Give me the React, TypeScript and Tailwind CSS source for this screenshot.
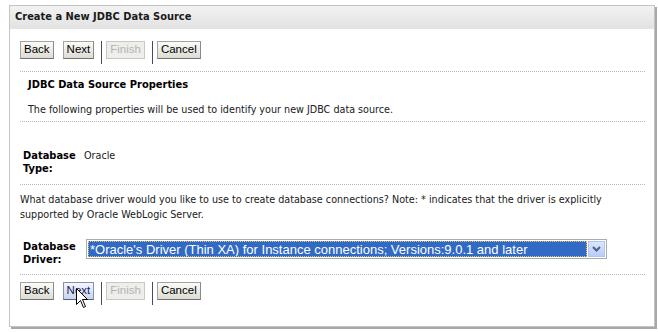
import React from "react";

const tahoma = "font-['Tahoma','DejaVu_Sans_Condensed','Liberation_Sans',sans-serif]";

const Btn = ({ label, disabled, hover }: { label: string; disabled?: boolean; hover?: boolean }) => (
  <button
    className={`h-[18px] px-[3px] text-[11.5px] leading-none font-['Liberation_Sans',Arial,sans-serif] border ${
      disabled
        ? "text-[#b4b4b4] border-[#c8c8c8] bg-[#eeeeea]"
        : hover
          ? "text-[#202060] border-[#8090b8] border-b-[#506080] bg-gradient-to-b from-[#f4f6fc] to-[#c8d4ec]"
          : "text-black border-[#a4a4a4] border-b-[#707070] border-r-[#8a8a8a] bg-gradient-to-b from-[#fbfbf8] to-[#dcdcd4]"
    }`}
  >
    {label}
  </button>
);

const Sep = () => <div className="w-px h-[23px] bg-[#4a4a58] ml-[7px] mr-[4px]" />;

const ButtonRow = ({ hoverNext }: { hoverNext?: boolean }) => (
  <div className="flex items-start h-[23px]">
    <Btn label="Back" />
    <div className="w-[9px]" />
    <Btn label="Next" hover={hoverNext} />
    <Sep />
    <Btn label="Finish" disabled />
    <Sep />
    <Btn label="Cancel" />
  </div>
);

const Dots = () => <div className="border-t border-dotted border-[#b8b8b8] mr-[9px]" />;

const Cursor = () => (
  <svg className="absolute left-[76px] top-[288px]" width="13" height="21" viewBox="0 0 13 21">
    <path
      d="M0.5 0.5 L0.5 16.5 L4.5 12.5 L7.5 19.5 L9.5 18.5 L6.5 11.5 L11.5 11.5 Z"
      fill="#fff"
      stroke="#000"
      strokeWidth="1"
    />
  </svg>
);

export default function App() {
  return (
    <div className="relative w-[658px] h-[332px] bg-white pt-[5px] pl-[9px]">
      <div className="w-[646px] h-[322px] border border-[#c4c4c4] shadow-[2px_2px_0_#a8a8a8]">
        <div
          className={`h-[23px] bg-gradient-to-b from-[#f2f2f2] to-[#e2e2e2] pl-[5px] flex items-center text-[11px] font-bold text-[#1a1a1a] ${tahoma}`}
        >
          Create a New JDBC Data Source
        </div>

        <div className={`pl-[10px] text-[10.7px] text-[#202020] ${tahoma}`}>
          <div className="pt-[12px]">
            <ButtonRow />
          </div>
          <div className="pt-[7px]">
            <Dots />
          </div>
          <div className="pl-[8px] pt-[6px] h-[31px] font-bold text-[11px] text-black leading-[14px]">
            JDBC Data Source Properties
          </div>
          <div className="pl-[8px] h-[18px] leading-[14px]">
            The following properties will be used to identify your new JDBC data source.
          </div>
          <Dots />

          <div className="flex pl-[3px] pt-[27px] h-[62px] leading-[13px]">
            <div className="w-[61px] font-bold text-black text-[11px]">
              Database
              <br />
              Type:
            </div>
            <div>Oracle</div>
          </div>
          <Dots />

          <div className="pt-[7px] h-[46px] leading-[15px]">
            What database driver would you like to use to create database connections? Note: * indicates that the driver is explicitly
            <br />
            supported by Oracle WebLogic Server.
          </div>

          <div className="flex items-start pl-[3px] h-[43px] pt-[8px]">
            <div className="w-[63px] font-bold text-black text-[11px] leading-[13px] pt-[1px]">
              Database
              <br />
              Driver:
            </div>
            <div className="flex w-[521px] h-[20px] border border-[#a5acb2] bg-white p-px">
              <div className="flex-1 bg-[#316ac5] border border-dotted border-[#e8c860] text-white text-[13px] leading-[15px] px-[1px] font-['Liberation_Sans',Arial,sans-serif] whitespace-nowrap overflow-hidden">
                *Oracle's Driver (Thin XA) for Instance connections; Versions:9.0.1 and later
              </div>
              <div className="w-[17px] ml-px bg-gradient-to-b from-[#dce6fe] to-[#b8ccf8] border border-[#b0c4f4] flex items-center justify-center">
                <svg width="9" height="6" viewBox="0 0 9 6">
                  <path d="M1 1 L4.5 4.5 L8 1" fill="none" stroke="#4d6185" strokeWidth="2" />
                </svg>
              </div>
            </div>
          </div>
          <Dots />
          <div className="pt-[7px]">
            <ButtonRow hoverNext />
          </div>
        </div>
      </div>
      <Cursor />
    </div>
  );
}
